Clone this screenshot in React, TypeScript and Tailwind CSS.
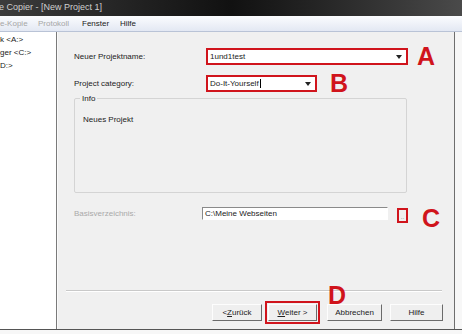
const ui = "font-['Liberation_Sans',Arial,sans-serif]";

function RedLetter({ children }: { children: string }) {
  return (
    <span className="text-[25px] font-bold leading-none text-[#d0141c]">{children}</span>
  );
}

function DropArrow() {
  return (
    <svg width="6" height="4" viewBox="0 0 6 4" aria-hidden="true">
      <path d="M0 0 H6 L3 4 Z" fill="#222" />
    </svg>
  );
}

function WinButton({ children, w }: { children: React.ReactNode; w: string }) {
  return (
    <div
      className={`${w} flex h-[17px] items-center justify-center border border-t-[#fdfdfd] border-l-[#fdfdfd] border-r-[#6b6b6b] border-b-[#6b6b6b] bg-[#efefef] text-[8px] text-[#222]`}
    >
      {children}
    </div>
  );
}

export default function App() {
  return (
    <div className={`${ui} flex h-[334px] w-[462px] flex-col overflow-hidden bg-[#f0f0f0]`}>
      {/* title bar */}
      <div className="flex h-[16px] items-center bg-gradient-to-r from-[#3c3c3c] via-[#111] to-[#4a4a4a] pl-0">
        <span className="-ml-[1px] text-[9px] text-[#cfcfcf]">e Copier - [New Project 1]</span>
      </div>

      {/* menu bar */}
      <div className="flex h-[16px] items-center border-b border-[#b9c3d6] bg-gradient-to-b from-[#fbfcfe] to-[#e3e8f3] text-[8px]">
        <span className="w-[38px] text-[#a6a6a6]">e-Kopie</span>
        <span className="w-[44px] text-[#a6a6a6]">Protokoll</span>
        <span className="w-[38px] text-[#222]">Fenster</span>
        <span className="text-[#222]">Hilfe</span>
      </div>

      <div className="flex h-[297px]">
        {/* tree */}
        <div className="flex w-[57px] flex-col gap-[3px] border-r border-[#7a7a7a] bg-white pt-[3px] text-[8px] leading-[10px] text-[#222]">
          <span>k &lt;A:&gt;</span>
          <span>ger &lt;C:&gt;</span>
          <span>D:&gt;</span>
        </div>

        {/* wizard page */}
        <div className="relative flex flex-1 flex-col border-l border-[#fafafa] bg-[#f0f0f0] pl-[16px] pt-[16px] text-[8px] text-[#222]">
          <div className="flex h-[17px] items-center">
            <span className="w-[132px]">Neuer Projektname:</span>
            <div className="flex h-[17px] w-[202px] items-center justify-between border-2 border-[#d0141c] bg-white pl-[2px] pr-[4px]">
              <span>1und1test</span>
              <DropArrow />
            </div>
            <span className="ml-[9px]">
              <RedLetter>A</RedLetter>
            </span>
          </div>

          <div className="mt-[10px] flex h-[17px] items-center">
            <span className="w-[132px]">Project category:</span>
            <div className="flex h-[17px] w-[111px] items-center justify-between border-2 border-[#d0141c] bg-white pl-[2px] pr-[4px]">
              <span>
                Do-It-Yourself<span className="ml-[1px] inline-block h-[9px] w-px bg-black align-middle" />
              </span>
              <DropArrow />
            </div>
            <span className="ml-[13px]">
              <RedLetter>B</RedLetter>
            </span>
          </div>

          <div className="relative mt-[6px] h-[95px] w-[333px] rounded-[2px] border border-[#d4d4d4] pl-[8px] pt-[15px]">
            <span className="absolute -top-[6px] left-[5px] bg-[#f0f0f0] px-[2px]">Info</span>
            <span>Neues Projekt</span>
          </div>

          <div className="mt-[14px] flex h-[16px] items-start">
            <span className="mt-[1px] w-[128px] text-[#a9a9a9]">Basisverzeichnis:</span>
            <div className="flex h-[13px] w-[186px] items-center border border-t-[#8a8a8a] border-l-[#8a8a8a] border-r-white border-b-white bg-white pl-[2px]">
              C:\Meine Webseiten
            </div>
            <div className="ml-[9px] mt-[1px] flex h-[15px] w-[11px] items-end justify-center border-2 border-[#d0141c] bg-[#efefef] text-[6px] leading-[8px] text-[#666]">
              ..
            </div>
            <span className="-mt-[1px] ml-[14px]">
              <RedLetter>C</RedLetter>
            </span>
          </div>

          <div className="-ml-[8px] mt-[67px] h-[2px] w-[376px] border-t border-b border-t-[#c9c9c9] border-b-white" />

          <div className="mt-[9px] flex items-center">
            <div className="ml-[138px]">
              <WinButton w="w-[50px]">&lt; <span className="underline">Z</span>urück</WinButton>
            </div>
            <div className="ml-[3px] border-2 border-[#d0141c] p-[1px]">
              <WinButton w="w-[49px]">
                <span className="underline">W</span>eiter &gt;
              </WinButton>
            </div>
            <div className="ml-[7px]">
              <WinButton w="w-[55px]">Abbrechen</WinButton>
            </div>
            <div className="ml-[8px]">
              <WinButton w="w-[53px]">Hilfe</WinButton>
            </div>
          </div>

          <span className="absolute left-[270px] top-[251px]">
            <RedLetter>D</RedLetter>
          </span>
        </div>

        {/* right frame */}
        <div className="w-[8px] border-l border-[#6e6e6e] bg-[#f7f7f7]" />
      </div>

      <div className="flex-1 border-t border-[#555] bg-[#f7f7f7]" />
    </div>
  );
}
